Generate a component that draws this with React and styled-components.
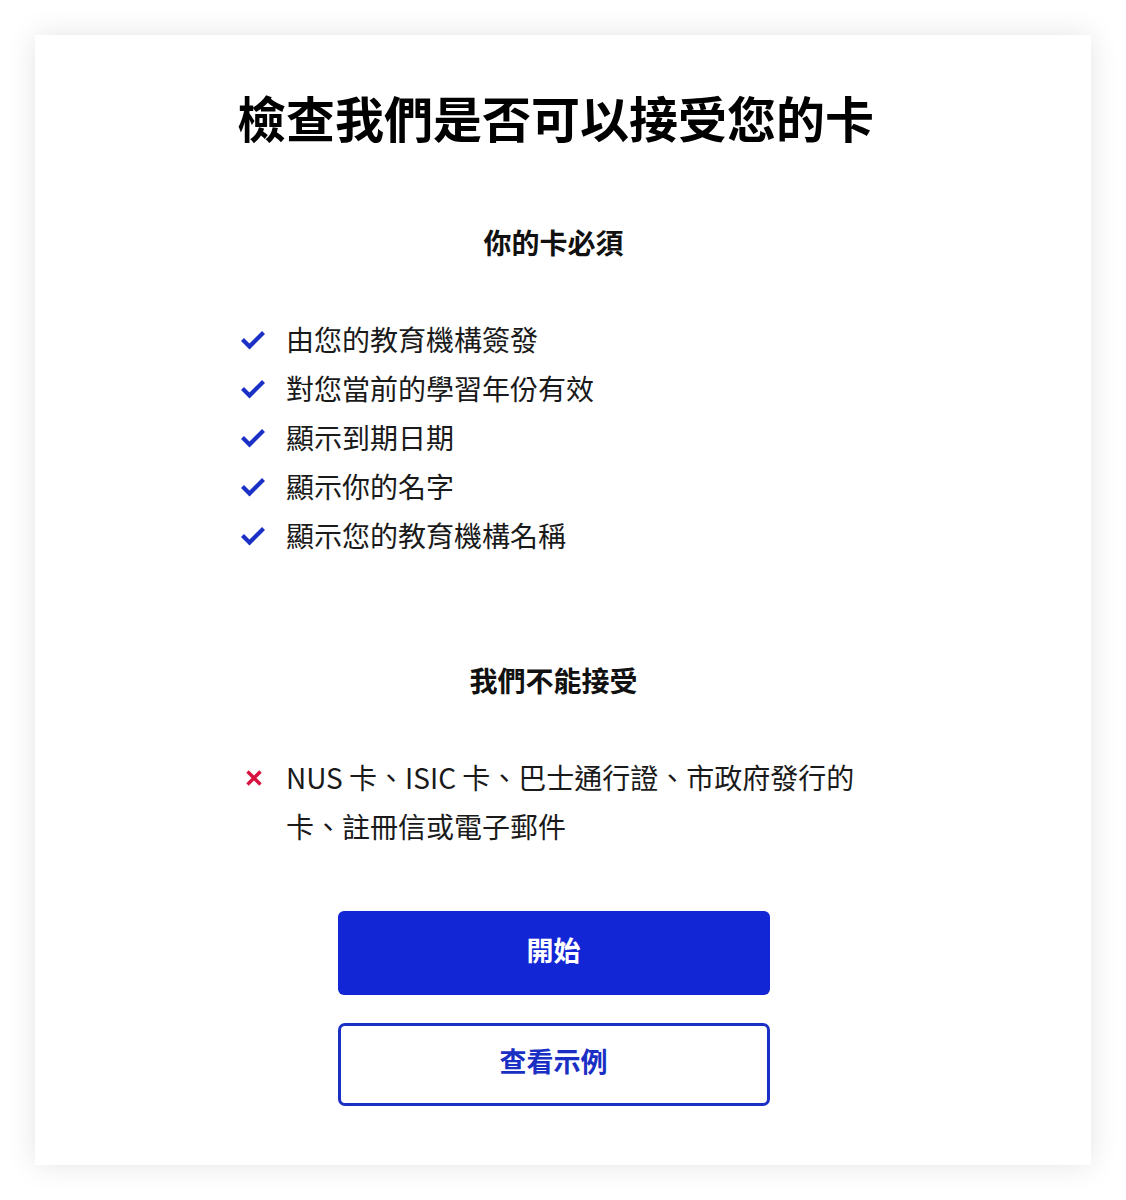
import styled, { createGlobalStyle } from "styled-components";

const GlobalStyle = createGlobalStyle`
	html, body {
		margin: 0;
		padding: 0;
		background: #ffffff;
	}
	body {
		font-family: "Noto Sans CJK TC", "Noto Sans", sans-serif;
		color: #111111;
	}
`;

const musts = [
	"由您的教育機構簽發",
	"對您當前的學習年份有效",
	"顯示到期日期",
	"顯示你的名字",
	"顯示您的教育機構名稱",
];

const CheckIcon = () => (
	<svg width="26" height="20" viewBox="0 0 26 20">
		<path d="M2.5 9.5 L9.5 16.5 L23.5 2.5" fill="none" stroke="#1b30c4" strokeWidth="4.2" strokeLinejoin="miter" />
	</svg>
);

const CrossIcon = () => (
	<svg width="18" height="18" viewBox="0 0 18 18">
		<path d="M2.5 2.5 L15.5 15.5 M15.5 2.5 L2.5 15.5" fill="none" stroke="#d8123f" strokeWidth="3.4" />
	</svg>
);

const App = () => {
	return (
		<>
			<GlobalStyle />
			<Page>
				<Card>
					<Content>
						<Title>檢查我們是否可以接受您的卡</Title>
						<SectionTitle>你的卡必須</SectionTitle>
						<List>
							{musts.map((text) => (
								<Item key={text}>
									<IconSlot $inset={3}>
										<CheckIcon />
									</IconSlot>
									<ItemText>{text}</ItemText>
								</Item>
							))}
						</List>
						<SectionTitle $gap={102}>我們不能接受</SectionTitle>
						<List>
							<Item>
								<IconSlot $inset={8}>
									<CrossIcon />
								</IconSlot>
								<ItemText>NUS 卡、ISIC 卡、巴士通行證、市政府發行的卡、註冊信或電子郵件</ItemText>
							</Item>
						</List>
						<Buttons>
							<PrimaryButton>開始</PrimaryButton>
							<OutlineButton>查看示例</OutlineButton>
						</Buttons>
					</Content>
				</Card>
			</Page>
		</>
	);
};

const Page = styled.div`
	padding: 35px;
	width: 1126px;
	box-sizing: border-box;
`;

const Card = styled.div`
	width: 1056px;
	height: 1130px;
	box-sizing: border-box;
	background: #ffffff;
	box-shadow: 0 0 28px rgba(0, 0, 0, 0.11);
	padding: 51px 221px 0 202px;
`;

const Content = styled.div`
	display: flex;
	flex-direction: column;
`;

const Title = styled.h1`
	margin: 0;
	text-align: center;
	font-size: 49px;
	line-height: 62px;
	font-weight: 700;
	color: #000000;
	white-space: nowrap;
`;

const SectionTitle = styled.h2`
	margin: ${(p) => p.$gap || 76}px 0 0;
	text-align: center;
	font-size: 28px;
	line-height: 36px;
	font-weight: 700;
	color: #111111;
`;

const List = styled.ul`
	list-style: none;
	margin: 55px 0 0;
	padding: 0;
	display: flex;
	flex-direction: column;
`;

const Item = styled.li`
	display: flex;
	align-items: flex-start;
	font-size: 28px;
	line-height: 49px;
	color: #1a1a1a;
`;

const IconSlot = styled.span`
	flex: 0 0 49px;
	height: 49px;
	box-sizing: border-box;
	padding-left: ${(p) => p.$inset}px;
	display: flex;
	align-items: center;
	justify-content: flex-start;
`;

const ItemText = styled.span`
	flex: 1;
	max-width: 580px;
`;

const Buttons = styled.div`
	display: flex;
	flex-direction: column;
	align-items: center;
	gap: 28px;
	margin-top: 60px;
`;

const PrimaryButton = styled.button`
	width: 432px;
	height: 84px;
	padding: 0 0 8px;
	border: none;
	border-radius: 6px;
	background: #1226d6;
	color: #ffffff;
	font-family: "Noto Sans CJK TC", sans-serif;
	font-size: 27px;
	font-weight: 700;
	cursor: pointer;
`;

const OutlineButton = styled.button`
	width: 432px;
	height: 83px;
	padding: 0 0 8px;
	box-sizing: border-box;
	border: 3px solid #1a2fc4;
	border-radius: 7px;
	background: #ffffff;
	color: #1a2fc4;
	font-family: "Noto Sans CJK TC", sans-serif;
	font-size: 27px;
	font-weight: 700;
	cursor: pointer;
`;

export default App;
